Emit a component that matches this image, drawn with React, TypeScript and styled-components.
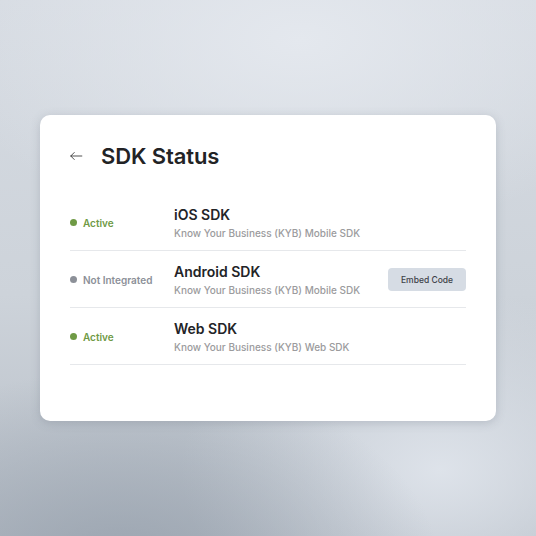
import React from "react";
import styled, { createGlobalStyle } from "styled-components";

const Global = createGlobalStyle`
  html, body { margin: 0; padding: 0; }
  body { font-family: Inter, "Noto Sans", sans-serif; }
`;

const Page = styled.div`
  width: 536px;
  height: 536px;
  display: flex;
  align-items: center;
  justify-content: center;
  background:
    radial-gradient(ellipse 320px 200px at 120px 570px, rgba(150,160,172,0.85), rgba(150,160,172,0) 100%),
    radial-gradient(ellipse 260px 180px at 440px 470px, rgba(225,230,237,0.9), rgba(225,230,237,0) 100%),
    radial-gradient(ellipse 360px 200px at 300px 40px, rgba(228,232,238,1), rgba(228,232,238,0) 100%),
    linear-gradient(180deg, #d6dbe2 0%, #cdd3da 55%, #b7bec7 100%);
`;

const Card = styled.div`
  width: 456px;
  height: 306px;
  box-sizing: border-box;
  background: #ffffff;
  border-radius: 10px;
  box-shadow: 0 2px 10px rgba(90, 100, 115, 0.25);
  padding: 28px 30px 0 30px;
  display: flex;
  flex-direction: column;
`;

const Header = styled.div`
  display: flex;
  align-items: center;
  height: 26px;
  gap: 18px;
`;

const BackButton = styled.button`
  border: none;
  background: none;
  padding: 0;
  width: 14px;
  height: 14px;
  display: flex;
  align-items: center;
  justify-content: center;
  color: #2a2a2a;
  margin-left: -1px;
`;

const Title = styled.h1`
  margin: 0;
  font-size: 22px;
  line-height: 26px;
  font-weight: 600;
  color: #222325;
  letter-spacing: -0.1px;
`;

const List = styled.div`
  margin-top: 25px;
  display: flex;
  flex-direction: column;
`;

const Row = styled.div`
  height: 57px;
  box-sizing: border-box;
  border-bottom: 1px solid #e6e8eb;
  display: grid;
  grid-template-columns: 104px 1fr auto;
  align-items: center;
`;

const Status = styled.div<{ $active: boolean }>`
  display: flex;
  align-items: center;
  gap: 6px;
  font-size: 10px;
  font-weight: 600;
  color: ${(p) => (p.$active ? "#6f9a45" : "#8c9098")};
  margin-top: 1px;
`;

const Dot = styled.span<{ $active: boolean }>`
  width: 7px;
  height: 7px;
  border-radius: 50%;
  background: ${(p) => (p.$active ? "#6f9a45" : "#8c9098")};
`;

const Info = styled.div`
  display: flex;
  flex-direction: column;
  gap: 4px;
  margin-top: 1px;
`;

const Name = styled.div`
  font-size: 14px;
  line-height: 17px;
  font-weight: 600;
  color: #232427;
`;

const Desc = styled.div`
  font-size: 10px;
  line-height: 13px;
  font-weight: 500;
  color: #9b9b9d;
`;

const EmbedButton = styled.button`
  width: 78px;
  height: 23px;
  border: none;
  border-radius: 4px;
  background: #d6dce4;
  color: #3d4148;
  font-family: Inter, "Noto Sans", sans-serif;
  font-size: 8.5px;
  font-weight: 500;
  padding: 0;
  margin-top: 1px;
`;

const ArrowIcon = () => (
  <svg width="14" height="14" viewBox="0 0 24 24" fill="none" stroke="currentColor" strokeWidth="1.4" strokeLinecap="round" strokeLinejoin="round">
    <path d="M22 12H3" />
    <path d="M9 6l-6 6 6 6" />
  </svg>
);

const sdks = [
  { name: "iOS SDK", desc: "Know Your Business (KYB) Mobile SDK", active: true },
  { name: "Android SDK", desc: "Know Your Business (KYB) Mobile SDK", active: false },
  { name: "Web SDK", desc: "Know Your Business (KYB) Web SDK", active: true },
];

export default function App() {
  return (
    <>
      <Global />
      <Page>
        <Card>
          <Header>
            <BackButton aria-label="Back">
              <ArrowIcon />
            </BackButton>
            <Title>SDK Status</Title>
          </Header>
          <List>
            {sdks.map((s) => (
              <Row key={s.name}>
                <Status $active={s.active}>
                  <Dot $active={s.active} />
                  {s.active ? "Active" : "Not Integrated"}
                </Status>
                <Info>
                  <Name>{s.name}</Name>
                  <Desc>{s.desc}</Desc>
                </Info>
                {s.active ? <span /> : <EmbedButton>Embed Code</EmbedButton>}
              </Row>
            ))}
          </List>
        </Card>
      </Page>
    </>
  );
}
